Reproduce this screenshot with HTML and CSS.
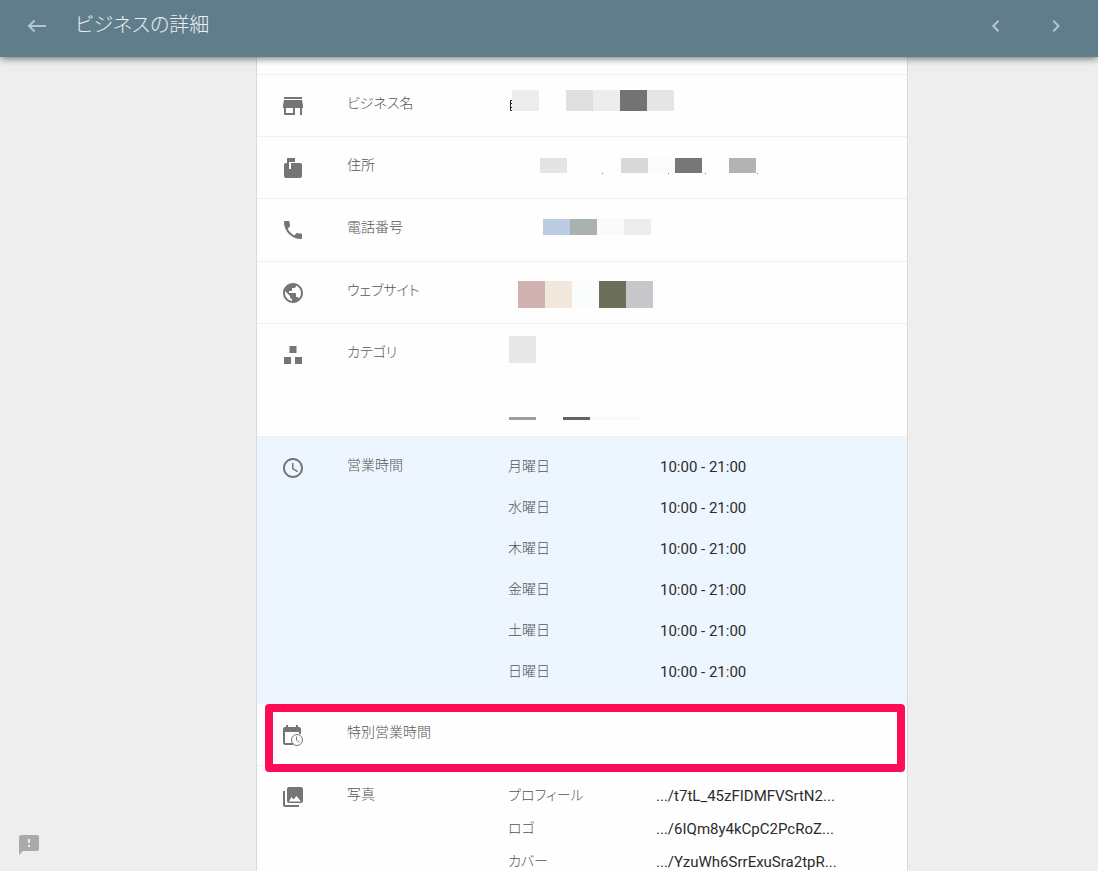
FILE: index.html
```html
<!DOCTYPE html>
<html lang="ja">
<head>
<meta charset="utf-8">
<meta name="viewport" content="width=device-width, initial-scale=1">
<title>ビジネスの詳細</title>
<link rel="stylesheet" href="styles.css">
</head>
<body>
<header class="topbar">
  <button class="icon-button" type="button" aria-label="戻る">
    <svg class="icon" viewBox="0 0 24 24"><path class="stroke" d="M21 12H4.500M9.500 6.500L4 12l5.500 5.500"/></svg>
  </button>
  <h1 class="title">ビジネスの詳細</h1>
  <nav class="pager">
    <button class="icon-button" type="button" aria-label="前へ">
      <svg class="icon" viewBox="0 0 24 24"><path class="stroke" d="M14.500 6.800L9.300 12l5.200 5.200"/></svg>
    </button>
    <button class="icon-button" type="button" aria-label="次へ">
      <svg class="icon" viewBox="0 0 24 24"><path class="stroke" d="M9.300 6.800L14.500 12l-5.200 5.200"/></svg>
    </button>
  </nav>
</header>

<main class="page">
  <div class="card">
    <div class="card-head"></div>

    <section class="row">
      <svg class="icon" viewBox="0 0 24 24"><path d="M21 3H3v2h18V3zm1 11v-3l-1-5H3l-1 5v3h1v7h11v-7h5v7h2v-7h1zm-10 5H5v-5h7v5z"/></svg>
      <h2 class="label">ビジネス名</h2>
      <svg class="mosaic" width="300" height="61" viewBox="0 0 300 61">
        <path d="M4 25.500H2.500V35.500H4M2.500 28.500H4M2.500 32.500H4" fill="none" stroke="#222"/>
        <path fill="#ededed" d="M4 15h27v21H4zM85 15h27v21H85z"/>
        <path fill="#dfdfdf" d="M58 15h27v21H58z"/>
        <path fill="#737373" d="M112 15h27v21h-27z"/>
        <path fill="#e5e5e5" d="M139 15h27v21h-27z"/>
      </svg>
    </section>

    <section class="row">
      <svg class="icon" viewBox="0 0 24 24"><path d="M19 7h-9v6H8V6h6V2H6v5H5a2 2 0 0 0-2 2v11a2 2 0 0 0 2 2h14a2 2 0 0 0 2-2V9a2 2 0 0 0-2-2z"/></svg>
      <h2 class="label">住所</h2>
      <svg class="mosaic" width="300" height="61" viewBox="0 0 300 61">
        <path fill="#e4e4e4" d="M32 21h27v15H32z"/>
        <path fill="#d8d8d8" d="M113 21h27v15h-27z"/>
        <path fill="#fbfbfb" d="M140 21h27v15h-27z"/>
        <path fill="#777" d="M167 21h27v15h-27z"/>
        <path fill="#b3b3b3" d="M221 21h27v15h-27z"/>
        <path fill="#777" d="M94 36h1v1h-1zM160 36h1v1h-1zM197 36h1v1h-1zM249 36h1v1h-1z"/>
      </svg>
    </section>

    <section class="row row-phone">
      <svg class="icon" viewBox="0 0 24 24"><path d="M6.620 10.790c1.440 2.830 3.760 5.140 6.590 6.590l2.200-2.200c.27-.27.67-.36 1.020-.24 1.120.37 2.330.57 3.570.57.55 0 1 .45 1 1V20c0 .55-.45 1-1 1-9.390 0-17-7.610-17-17 0-.55.45-1 1-1h3.500c.55 0 1 .45 1 1 0 1.250.2 2.450.57 3.570.11.35.03.74-.25 1.020l-2.200 2.200z"/></svg>
      <h2 class="label">電話番号</h2>
      <svg class="mosaic" width="300" height="61" viewBox="0 0 300 61">
        <path fill="#bbcce2" d="M35 20h27v16H35z"/>
        <path fill="#a9b1af" d="M62 20h27v16H62z"/>
        <path fill="#f9f9f9" d="M89 20h27v16H89z"/>
        <path fill="#ececec" d="M116 20h27v16h-27z"/>
      </svg>
    </section>

    <section class="row">
      <svg class="icon" viewBox="0 0 24 24"><path d="M12 2C6.480 2 2 6.480 2 12s4.480 10 10 10 10-4.480 10-10S17.520 2 12 2zm-1 17.930c-3.950-.49-7-3.850-7-7.930 0-.62.08-1.210.21-1.790L9 15v1c0 1.100.9 2 2 2v1.930zm6.900-2.540c-.26-.81-1-1.390-1.900-1.390h-1v-3c0-.55-.45-1-1-1H8v-2h2c.55 0 1-.45 1-1V7h2c1.100 0 2-.9 2-2v-.41c2.930 1.190 5 4.060 5 7.410 0 2.080-.8 3.970-2.100 5.390z"/></svg>
      <h2 class="label">ウェブサイト</h2>
      <svg class="mosaic" width="300" height="61" viewBox="0 0 300 61">
        <path fill="#d2b1b1" d="M10 19h27v27H10z"/>
        <path fill="#f2e7dd" d="M37 19h27v27H37z"/>
        <path fill="#fbfdfd" d="M64 19h27v27H64z"/>
        <path fill="#6c705a" d="M91 19h27v27H91z"/>
        <path fill="#c8c6cb" d="M118 19h27v27h-27z"/>
      </svg>
    </section>

    <section class="row">
      <svg class="icon" viewBox="0 0 24 24"><path d="M8.500 3h7v7h-7zM3 14h7v7H3zM14 14h7v7h-7z"/></svg>
      <h2 class="label">カテゴリ</h2>
      <svg class="mosaic" width="300" height="112" viewBox="0 0 300 112">
        <path fill="#e7e7e7" d="M1 12h27v27H1z"/>
        <path fill="#9e9e9e" d="M1 93h27v3H1z"/>
        <path fill="#646464" d="M55 93h27v3H55z"/>
        <path fill="#fafafa" d="M82 93h54v3H82z"/>
      </svg>
    </section>

    <section class="row row-hours">
      <svg class="icon" viewBox="0 0 24 24"><path d="M11.990 2C6.470 2 2 6.480 2 12s4.470 10 9.990 10C17.520 22 22 17.520 22 12S17.520 2 11.990 2zM12 20c-4.420 0-8-3.580-8-8s3.580-8 8-8 8 3.580 8 8-3.580 8-8 8zm.5-13H11v6l5.250 3.150.75-1.230-4.500-2.670z"/></svg>
      <h2 class="label">営業時間</h2>
      <table class="table hours">
        <tr><th scope="row">月曜日</th><td>10:00 - 21:00</td></tr>
        <tr><th scope="row">水曜日</th><td>10:00 - 21:00</td></tr>
        <tr><th scope="row">木曜日</th><td>10:00 - 21:00</td></tr>
        <tr><th scope="row">金曜日</th><td>10:00 - 21:00</td></tr>
        <tr><th scope="row">土曜日</th><td>10:00 - 21:00</td></tr>
        <tr><th scope="row">日曜日</th><td>10:00 - 21:00</td></tr>
      </table>
    </section>

    <section class="row row-marked">
      <svg class="icon" viewBox="0 0 24 24">
        <path d="M18 4h-1V2h-2v2H7V2H5v2H4a2 2 0 0 0-2 2v14a2 2 0 0 0 2 2h8v-2H4V9h14v2h2V6a2 2 0 0 0-2-2z"/>
        <circle class="thin" cx="16" cy="17" r="5.500"/>
        <path class="thin" d="M15.500 13.500V17l3 2.500"/>
      </svg>
      <h2 class="label">特別営業時間</h2>
    </section>

    <section class="row">
      <svg class="icon" viewBox="0 0 24 24"><path d="M22 16V4c0-1.100-.9-2-2-2H8c-1.100 0-2 .9-2 2v12c0 1.100.9 2 2 2h12c1.100 0 2-.9 2-2zm-11.500-4l2 2.500L15.500 11l4.500 5.500H8l2.500-4.500zM2 6v14c0 1.100.9 2 2 2h14v-2H4V6H2z"/></svg>
      <h2 class="label">写真</h2>
      <table class="table photos">
        <tr><th scope="row">プロフィール</th><td>.../t7tL_45zFIDMFVSrtN2...</td></tr>
        <tr><th scope="row">ロゴ</th><td>.../6IQm8y4kCpC2PcRoZ...</td></tr>
        <tr><th scope="row">カバー</th><td>.../YzuWh6SrrExuSra2tpR...</td></tr>
      </table>
    </section>
  </div>
</main>

<button class="feedback" type="button" aria-label="フィードバック">
  <svg class="icon" viewBox="0 0 24 24"><path d="M20 2H4c-1.100 0-2 .9-2 2v18l4-4h14c1.100 0 2-.9 2-2V4c0-1.100-.9-2-2-2zm-7 12h-2v-2h2v2zm0-4h-2V6h2v4z"/></svg>
</button>
</body>
</html>
```

FILE: styles.css
```css
* {
  box-sizing: border-box;
}

body {
  margin: 0;
  height: 100vh;
  display: flex;
  flex-direction: column;
  overflow: hidden;
  background: #eee;
  color: #2c2c2c;
  font-family: Roboto, "Noto Sans CJK JP", sans-serif;
  font-size: 15px;
}

button {
  padding: 0;
  border: 0;
  background: none;
  color: inherit;
}

.icon {
  display: block;
  width: 24px;
  height: 24px;
  fill: currentColor;
}

.stroke {
  fill: none;
  stroke: currentColor;
  stroke-width: 2;
}

.thin {
  fill: #fff;
  stroke: currentColor;
  stroke-width: 1;
}

.topbar {
  position: relative;
  z-index: 1;
  flex: none;
  display: flex;
  align-items: center;
  padding: 12px 30px 18px 25px;
  background: #607d8b;
  box-shadow: 0 1px 8px rgba(0, 0, 0, 0.6);
}

.icon-button {
  color: #b7c4cb;
}

.title {
  flex: 1;
  margin: 0 0 0 26px;
  color: #eceff1;
  font-size: 20px;
  font-weight: 300;
  line-height: 27px;
  font-feature-settings: "palt";
}

.pager {
  display: flex;
  gap: 36px;
}

.page {
  flex: 1;
  min-height: 0;
  overflow: hidden;
  padding-left: 66px;
}

.card {
  max-width: 652px;
  min-height: 100%;
  margin: 0 auto;
  border: solid #dadada;
  border-width: 0 1px;
  background: #fefefe;
}

.card-head {
  height: 18px;
  border-bottom: 1px solid #f0f0f0;
}

.row {
  position: relative;
  display: grid;
  grid-template-columns: 66px 161px 1fr;
  align-items: start;
  min-height: 62px;
  padding-left: 24px;
  border-bottom: 1px solid #f0f0f0;
  color: #757575;
}

.row > .icon {
  margin-top: 19px;
}

.row-phone {
  min-height: 63px;
}

.row-hours {
  padding-bottom: 11px;
  background: #edf6ff;
}

.row-marked::after {
  content: "";
  position: absolute;
  inset: 0 2px -7px 8px;
  border: 8px solid #ff0c58;
  border-radius: 4px;
}

.label,
.table th {
  margin: 0;
  color: #555;
  font-size: 14px;
  font-weight: 300;
  text-align: left;
  font-feature-settings: "palt";
}

.label {
  padding-top: 18px;
  line-height: 20px;
}

.mosaic {
  display: block;
  max-width: 100%;
}

.table {
  width: 100%;
  table-layout: fixed;
  border-spacing: 0;
  line-height: 20px;
}

.table th,
.table td {
  padding: 0;
}

.table th {
  padding-bottom: 2px;
}

.table td {
  color: #2c2c2c;
}

.hours {
  margin-top: 9px;
}

.hours tr {
  height: 41px;
}

.hours th {
  width: 152px;
}

.photos {
  margin-top: 13px;
}

.photos tr {
  height: 33px;
}

.photos th {
  width: 148px;
}

.feedback {
  position: fixed;
  left: 17px;
  bottom: 14px;
  z-index: 2;
  color: #aaa;
}
```
